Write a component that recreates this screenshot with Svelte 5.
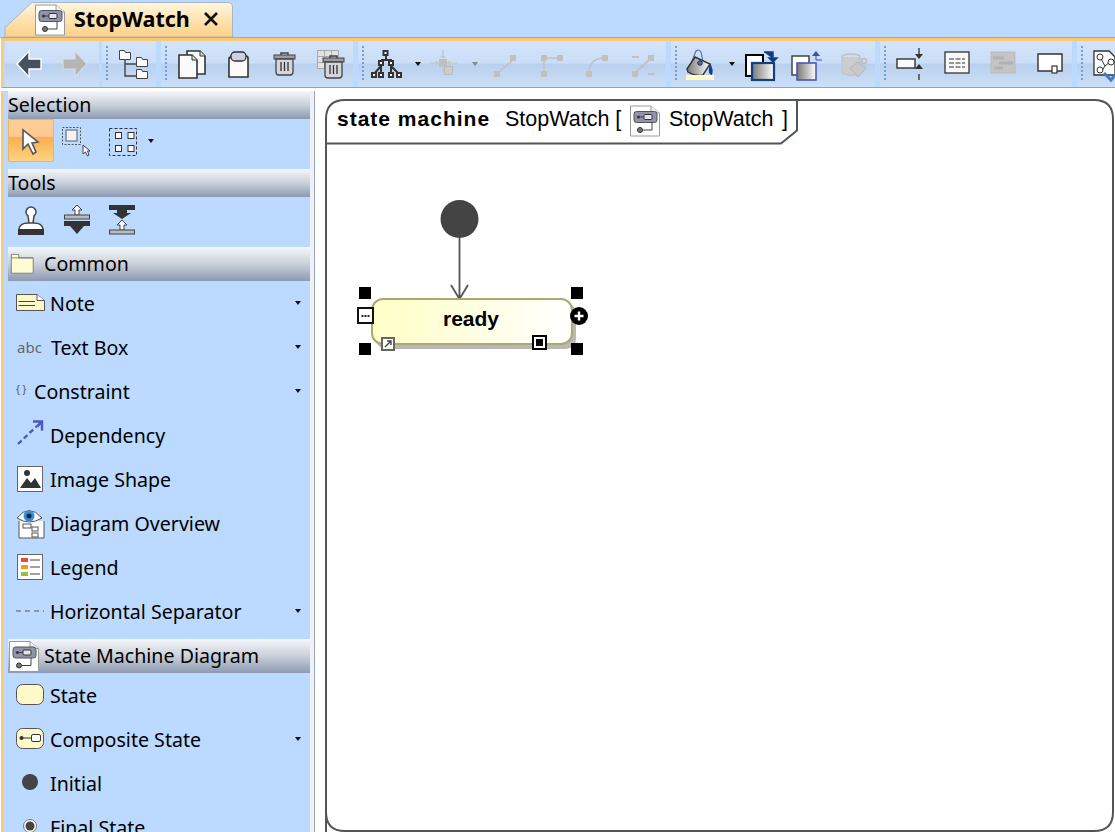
<script>
  const doc = `<path d="M1.500 1.500H22L30.500 8.500V31.500H1.500Z" fill="#fff" stroke="#9a9a9a"/><path d="M22 1.500V8.500H30.500" fill="#eee" stroke="#9a9a9a"/><rect x="5" y="7" width="23" height="11" rx="2.500" fill="#8f93ab" stroke="#555"/><rect x="15" y="10" width="8" height="5" rx="1" fill="#e4e4ee" stroke="#333"/><circle cx="9.500" cy="12.500" r="1.600" fill="#333"/><path d="M9.500 12.500H15M23 18V25.500H14" fill="none" stroke="#444"/><circle cx="11" cy="25.500" r="2.500" fill="#777" stroke="#333"/>`;
  const folder = (x, y) => `<path d="M${x}.5 ${y}.5h5l1 2h5v7h-11z" fill="#fff" stroke="#444" stroke-width="1"/>`;
  const paper = (x, y, w, h) => `<path d="M${x} ${y}H${x + w - 5}L${x + w} ${y + 5}V${y + h}H${x}Z" fill="#fbfbfb" stroke="#333" stroke-width="1.6"/><path d="M${x + w - 5} ${y}V${y + 5}H${x + w}" fill="#ddd" stroke="#333"/>`;
  const trash = (x, y) => `<path d="M${x + 7} ${y + 3}v-2h7v2" fill="none" stroke="#444" stroke-width="1.5"/><rect x="${x}" y="${y + 3}" width="21" height="4" fill="#9a9ca6" stroke="#444"/><path d="M${x + 2} ${y + 7}h17v13q0 3-3 3h-11q-3 0-3-3z" fill="#d5d5de" stroke="#444" stroke-width="1.3"/><path d="M${x + 7} ${y + 10}v9M${x + 10.5} ${y + 10}v9M${x + 14} ${y + 10}v9" stroke="#333" stroke-width="1.3"/>`;
  const gs = `fill="#c0c0c0" stroke="none"`;
  const sq = (x, y, s = 6) => `<rect x="${x}" y="${y}" width="${s}" height="${s}" ${gs}/>`;
  const icons = {
    back: `<path d="M4 16 16 3V11H28V21H16V29Z" fill="#44525f" stroke="#fff" stroke-width="1.4"/>`,
    forward: `<path d="M28 16 16 3V11H4V21H16V29Z" fill="#b5b5b5" stroke="#ddd" stroke-width="1.2"/>`,
    tree: folder(1, 2) + folder(18, 9) + folder(18, 21) + `<path d="M7 12V28H18M7 16H18" fill="none" stroke="#444" stroke-width="1.4"/>`,
    copy: paper(11, 3, 18, 23) + paper(3, 7, 18, 23),
    paste: `<path d="M8 10Q8 8 10 8H24Q26 8 26 10V29H7V10Z" fill="#fbfbfb" stroke="#333" stroke-width="1.6"/><rect x="9" y="4" width="15" height="9" rx="4" fill="#ced0e6" stroke="#333" stroke-width="1.3"/>`,
    trash: trash(6, 4),
    tabletrash: `<g fill="#e2e2e2" stroke="#aaa"><rect x="3.500" y="2.500" width="7" height="6"/><rect x="10.500" y="2.500" width="7" height="6"/><rect x="17.500" y="2.500" width="7" height="6"/><rect x="3.500" y="8.500" width="7" height="6"/><rect x="10.500" y="8.500" width="7" height="6"/><rect x="3.500" y="14.500" width="7" height="6"/><rect x="10.500" y="14.500" width="7" height="6"/></g>` + trash(9, 7),
    hier: `<g fill="#fff" stroke="#333" stroke-width="2"><path d="M16 8V12M11 17V24M21 17V24M11 18L4 26M21 18L29 26M11 12H21V16M11 12V16" fill="none"/><rect x="13.500" y="3" width="4" height="4"/><rect x="9" y="13" width="4" height="4"/><rect x="19" y="13" width="4" height="4"/><rect x="2" y="25" width="4" height="4"/><rect x="9" y="25" width="4" height="4"/><rect x="19" y="25" width="4" height="4"/><rect x="27" y="25" width="4" height="4"/></g>`,
    align: sq(12, 11, 8) + `<rect x="17.500" y="18.500" width="8" height="8" fill="#ccc" stroke="#bbb"/><path d="M16 2V10M14 8l2 2 2-2M16 24V20M2 15H11M9 13l2 2-2 2M30 15H21M23 13l-2 2 2 2" fill="none" stroke="#c4c4c4" stroke-width="1.2"/>`,
    l1: sq(5, 23) + sq(21, 7) + `<path d="M9 25 25 11" stroke="#c0c0c0" stroke-width="1.5"/>`,
    l2: sq(6, 7) + sq(22, 7) + sq(6, 23) + `<path d="M9 10H24M9 10V25" stroke="#c0c0c0" stroke-width="1.5"/>`,
    l3: sq(5, 23) + sq(21, 7) + `<path d="M8 25C8 14 14 10 24 10" fill="none" stroke="#c0c0c0" stroke-width="1.5"/>`,
    l4: sq(5, 23) + sq(21, 7) + `<path d="M8 25 24 10M5 9H12M21 26H28" stroke="#c0c0c0" stroke-width="2"/>`,
    bucket: `<path d="M8 13 12 3Q15 1 17 4L19 14" fill="none" stroke="#4c73c8" stroke-width="1.2"/><path d="M3 21 11 9 26 16 19 27Q12 29 4 24Z" fill="url(#bg)" stroke="#333" stroke-width="1.4"/><path d="M26 15Q30 22 28 27Q24 27 25 20Z" fill="#153f86"/><circle cx="16" cy="15" r="2.300" fill="#4c66b8" stroke="#234"/><rect x="2" y="27" width="28" height="5" fill="#fdfac8"/>`,
    front: `<rect x="2" y="7" width="17" height="21" fill="#fff" stroke="#000" stroke-width="2"/><rect x="8" y="15" width="22" height="17" fill="url(#bg)" stroke="#123f80" stroke-width="2.200"/><path d="M20 4H29V11M25 10H33L29 14Z" fill="#123f80" stroke="#123f80" stroke-width="1.500"/>`,
    backw: `<rect x="2" y="8" width="17" height="19" fill="#fff" stroke="#444" stroke-width="1.500"/><rect x="7" y="15" width="19" height="17" fill="url(#bg)" stroke="#4a55bb" stroke-width="1.600"/><path d="M22 8H30L26 3Z" fill="#3a4fb0"/><path d="M26 8V12H32" fill="none" stroke="#3a4fb0"/>`,
    bucketd: `<ellipse cx="15" cy="9" rx="9" ry="3" fill="none" stroke="#c0c0c0" stroke-width="1.400"/><path d="M6 9V25Q15 30 24 25V9" fill="#ccc" stroke="#c0c0c0"/><path d="M14 20 22 14 30 20 22 29Z" fill="#c8c8c8" stroke="#b5b5b5"/><circle cx="28" cy="13" r="2.500" fill="none" stroke="#bbb" stroke-width="1.500"/>`,
    size: `<rect x="2" y="11" width="18" height="9" fill="#fafafa" stroke="#333" stroke-width="1.400"/><path d="M24 0V6M24 26V32" stroke="#333" stroke-width="1.300"/><path d="M20 6H28L24 11ZM20 21H28L24 16Z" fill="#333"/>`,
    notes: `<rect x="4" y="4" width="24" height="21" fill="#f8f8f8" stroke="#333" stroke-width="1.300"/><path d="M8 11H24M8 15H24M8 19H24" stroke="#333" stroke-dasharray="5 1.500"/>`,
    grayrect: `<rect x="4" y="4" width="24" height="21" fill="#c4c4c4" stroke="#bbb"/><path d="M6 10H17M12 15H26M7 20H16" stroke="#b2b2b2" stroke-width="3"/>`,
    sizer: `<path d="M5 6H29V23H5Z" fill="#fff" stroke="#333" stroke-width="1.400"/><rect x="19" y="18" width="5" height="7" fill="#fff" stroke="#333" stroke-width="1.200"/>`,
    val: `<path d="M5 3H20L26 9V27H5Z" fill="#fff" stroke="#333" stroke-width="1.300"/><path d="M11 9 16 18M16 18 22 13M16 18 12 24" stroke="#333" fill="none"/><circle cx="11" cy="9" r="3" fill="#fff" stroke="#333"/><circle cx="22" cy="14" r="3" fill="#fff" stroke="#333"/><circle cx="11" cy="22" r="3" fill="#fff" stroke="#333"/><path d="M15 25 22 32 31 22" fill="none" stroke="#3f7fc4" stroke-width="3"/>`,
    pointer: `<path d="M8 5V24L13 19 18 29 21 27 17 18 23 17Z" fill="#fff" stroke="#555" stroke-width="1.600"/>`,
    rubber: `<rect x="1.500" y="2.500" width="18" height="17" fill="none" stroke="#555" stroke-dasharray="2 1.500"/><rect x="5" y="5" width="11" height="11" fill="#f2f2f2" stroke="#888" stroke-width="1.500"/><path d="M22 20V29L24.500 27 26.500 31 28 30 26.500 26 29 26Z" fill="#fff" stroke="#444"/>`,
    group: `<rect x="3.500" y="3.500" width="27" height="27" fill="none" stroke="#333" stroke-dasharray="3 2"/><g fill="#fff" stroke="#333"><rect x="9.500" y="7.500" width="6" height="6"/><rect x="22" y="7.500" width="6" height="6"/><rect x="9.500" y="20.500" width="6" height="6"/><rect x="22" y="20.500" width="6" height="6"/></g>`,
    stamp: `<circle cx="16" cy="9" r="5" fill="#fff" stroke="#444" stroke-width="1.500"/><path d="M13 13 14 20H18L19 13M4 26Q5 20 13 20H19Q27 20 28 26" fill="#fff" stroke="#444" stroke-width="1.500"/><rect x="3" y="26" width="26" height="6" fill="#333"/>`,
    spread: `<path d="M16 2 21 7H18V12H14V7H11Z" fill="#fff" stroke="#444"/><rect x="3.500" y="12" width="25" height="4" fill="#bbb" stroke="#444"/><rect x="3" y="18" width="26" height="5" fill="#333"/><path d="M9 23H23L16 31Z" fill="#333"/>`,
    join: `<rect x="3" y="2" width="26" height="5" fill="#333"/><path d="M11 7H21V10H25L16 16 7 10H11Z" fill="#333"/><path d="M16 17 21 22H18V27H14V22H11Z" fill="#fff" stroke="#444"/><rect x="3.500" y="27" width="25" height="4" fill="#bbb" stroke="#444"/>`,
    note: `<path d="M2.500 7.500H23L30.500 13.500V23.500H2.500Z" fill="#fef9c9" stroke="#555" stroke-width="1"/><path d="M23 7.500V13.500H30.500" fill="#fff" stroke="#555"/><path d="M4.500 14.500H21M4.500 18.500H21" stroke="#444"/>`,
    dep: `<path d="M4 25 23 7" stroke="#4a5abf" stroke-width="2.400" stroke-dasharray="5 3"/><path d="M19 2.500H28V11.500M28 2.500 23 7.500" fill="none" stroke="#4a5abf" stroke-width="2.500"/>`,
    image: `<rect x="3.500" y="3.500" width="25" height="25" fill="#fff" stroke="#666"/><circle cx="13" cy="10" r="3" fill="#333"/><path d="M6 25 13 15 17 20 21 15 27 25Z" fill="#333"/>`,
    overview: `<path d="M5 14V31H30V14" fill="#fff" stroke="#555"/><path d="M3 11Q15 -4 28 11Q15 19 3 11Z" fill="#fff" stroke="#555"/><circle cx="15" cy="9" r="5.500" fill="#2f8fe0"/><circle cx="15" cy="9" r="2.500" fill="#123"/><g fill="#fff" stroke="#555"><rect x="9" y="17" width="8" height="4"/><rect x="18" y="20" width="6" height="4"/><rect x="18" y="26" width="6" height="4"/></g>`,
    legend: `<rect x="3.500" y="3.500" width="25" height="25" fill="#fff" stroke="#666"/><rect x="7" y="7" width="7" height="4" fill="#e84a3c"/><rect x="7" y="14" width="7" height="4" fill="#f59a1e"/><rect x="7" y="21" width="7" height="4" fill="#93c13c"/><path d="M16 9H26M16 16H26M16 23H26" stroke="#444"/>`,
    sep: `<path d="M2 16H30" stroke="#555" stroke-dasharray="5 4" stroke-width="1"/>`,
    state: `<rect x="2.500" y="5.500" width="27" height="20" rx="6" fill="#fef9c9" stroke="#555"/>`,
    composite: `<rect x="2.500" y="5.500" width="27" height="20" rx="6" fill="#fef9c9" stroke="#555"/><circle cx="7.500" cy="15" r="2" fill="#333"/><path d="M8 15H17" stroke="#333"/><rect x="17.500" y="11.500" width="9" height="7" rx="1.500" fill="#fff" stroke="#333"/>`,
    initial: `<circle cx="16" cy="15" r="8" fill="#444"/>`,
    final: `<circle cx="16" cy="15" r="6.500" fill="#fff" stroke="#777"/><circle cx="16" cy="15" r="4.500" fill="#444"/>`,
    frag: doc
  };

  const groups = [
    { ml: 0, width: 94, grip: false, cells: [{ i: 'back' }, { i: 'forward' }] },
    { ml: 3, width: 54, grip: true, cells: [{ i: 'tree' }] },
    { ml: 5, width: 192, grip: true, cells: [{ i: 'copy', ml: -1 }, { i: 'paste' }, { i: 'trash' }, { i: 'tabletrash' }] },
    { ml: 5, width: 308, grip: true, cells: [{ i: 'hier', caret: true, ml: -4 }, { i: 'align', caret: true, dim: true, ml: 11 }, { i: 'l1', ml: 16 }, { i: 'l2' }, { i: 'l3' }, { i: 'l4' }] },
    { ml: 5, width: 204, grip: true, cells: [{ i: 'bucket', caret: true, ml: -3 }, { i: 'front', ml: 14 }, { i: 'backw' }, { i: 'bucketd' }] },
    { ml: 5, width: 192, grip: true, cells: [{ i: 'size', ml: -1 }, { i: 'notes' }, { i: 'grayrect' }, { i: 'sizer' }] },
    { ml: 5, width: 60, grip: true, cells: [{ i: 'val', ml: -4 }] }
  ];
  const common = [
    { i: 'note', t: 'Note', caret: true },
    { i: 'abc', t: 'Text Box', caret: true },
    { i: 'braces', t: 'Constraint', caret: true },
    { i: 'dep', t: 'Dependency' },
    { i: 'image', t: 'Image Shape' },
    { i: 'overview', t: 'Diagram Overview' },
    { i: 'legend', t: 'Legend' },
    { i: 'sep', t: 'Horizontal Separator', caret: true }
  ];
  const sm = [
    { i: 'state', t: 'State' },
    { i: 'composite', t: 'Composite State', caret: true },
    { i: 'initial', t: 'Initial' },
    { i: 'final', t: 'Final State' }
  ];
  const handles = [[359, 287], [571, 287], [359, 343], [571, 343]];
</script>

{#snippet ic(name, cls = 'i32')}
  <svg class={cls} viewBox="0 0 32 32" aria-hidden="true">{@html icons[name]}</svg>
{/snippet}

{#snippet row(r)}
  <div class="row">
    {#if r.i === 'abc'}
      <span class="abc">abc</span>
    {:else if r.i === 'braces'}
      <span class="braces">{'{ }'}</span>
    {:else}
      <span class="ricon">{@render ic(r.i)}</span>
    {/if}
    <span class="rlabel">{r.t}</span>
    {#if r.caret}<span class="caret rcaret"></span>{/if}
  </div>
{/snippet}

<svg class="defs" aria-hidden="true">
  <defs>
    <linearGradient id="bg" x1="0" x2="1" y1="0" y2="0">
      <stop offset="0" stop-color="#777" />
      <stop offset="1" stop-color="#fff" />
    </linearGradient>
    <linearGradient id="st" x1="0" x2="1" y1="0" y2="0">
      <stop offset="0" stop-color="#ffffc6" />
      <stop offset="1" stop-color="#ffffff" />
    </linearGradient>
    <linearGradient id="tabg" x1="0" x2="0" y1="0" y2="1">
      <stop offset="0" stop-color="#fff6df" />
      <stop offset="1" stop-color="#fdd084" />
    </linearGradient>
  </defs>
</svg>

<div class="app">
  <header class="tabs">
    <div class="tab">
      <svg class="tabshape" viewBox="0 0 234 37" aria-hidden="true">
        <path d="M5 37V27.500L32 2.500H228Q232.500 2.500 232.500 7V37Z" fill="url(#tabg)" stroke="#a9b6c6" />
      </svg>
      <span class="tabicon">{@render ic('frag')}</span>
      <span class="tabtitle">StopWatch</span>
      <svg class="close" viewBox="0 0 16 16" aria-hidden="true"><path d="M2 2 14 14M14 2 2 14" stroke="#111" stroke-width="2.600" /></svg>
    </div>
  </header>

  <div class="toolbar">
    {#each groups as g}
      <div class="group" class:first={!g.grip} style="width:{g.width}px;margin-left:{g.ml}px">
        {#if g.grip}<span class="grip"></span>{/if}
        {#each g.cells as c}
          <span class="cell" style="margin-left:{c.ml ?? 0}px">
            {@render ic(c.i)}
            {#if c.caret}<span class="caret tcaret" class:dim={c.dim}></span>{/if}
          </span>
        {/each}
      </div>
    {/each}
  </div>

  <div class="main">
    <aside class="palette">
      <div class="head">Selection</div>
      <div class="tools sel">
        <span class="btn active">{@render ic('pointer')}</span>
        <span class="btn">{@render ic('rubber')}</span>
        <span class="btn">{@render ic('group')}</span>
        <span class="caret selcaret"></span>
      </div>
      <div class="head">Tools</div>
      <div class="tools">
        <span class="btn">{@render ic('stamp')}</span>
        <span class="btn">{@render ic('spread')}</span>
        <span class="btn">{@render ic('join')}</span>
      </div>
      <div class="head big">
        <svg class="headicon" viewBox="0 0 32 32" aria-hidden="true"><path d="M1.500 26.500V5H10V9H26.500V26.500Z" fill="#fffcd3" stroke="#777" /><path d="M1.500 9H26.500" stroke="#777" /></svg>
        <span>Common</span>
      </div>
      {#each common as r}{@render row(r)}{/each}
      <div class="head big sm">
        <span class="smicon">{@render ic('frag')}</span>
        <span>State Machine Diagram</span>
      </div>
      {#each sm as r}{@render row(r)}{/each}
    </aside>

    <main class="canvas">
      <svg class="diagram" viewBox="0 88 1115 744" aria-label="State machine diagram">
        <path d="M326 840V119Q326 100 345 100H1094Q1113 100 1113 119V812Q1113 831 1094 831H345Q326 831 326 812Z" fill="#fff" stroke="#555" stroke-width="2" />
        <path d="M326 143.500H781L797 130.500V100" fill="none" stroke="#555" stroke-width="2" />
        <text x="337" y="126" class="kw">state machine</text>
        <text x="505" y="126" class="nm">StopWatch [</text>
        <g transform="translate(629 104)">
          <svg width="32" height="33" viewBox="0 0 32 32">{@html doc}</svg>
        </g>
        <text x="669" y="126" class="nm">StopWatch</text>
        <text x="782" y="126" class="nm">]</text>

        <circle cx="459.500" cy="219" r="19" fill="#444" />
        <path d="M459.500 238V299M451 285 459.500 299 468 285" fill="none" stroke="#555" stroke-width="1.800" />

        <rect x="376" y="303" width="200" height="46" rx="10" fill="#b8b8b8" />
        <rect x="372" y="299" width="200" height="45" rx="11" fill="url(#st)" stroke="#a9a970" stroke-width="2" />
        <text x="471" y="326" class="state">ready</text>

        {#each handles as h}<rect x={h[0]} y={h[1]} width="12" height="12" fill="#000" />{/each}
        <rect x="358" y="308" width="15" height="15" fill="#fff" stroke="#111" stroke-width="2" />
        <path d="M361.500 316H369.500" stroke="#222" stroke-width="2" stroke-dasharray="2 1" />
        <circle cx="579" cy="316" r="9" fill="#000" />
        <path d="M574.500 316H583.500M579 311.500V320.500" stroke="#fff" stroke-width="2.400" />
        <rect x="382" y="338" width="12" height="12" fill="#fff" stroke="#666" stroke-width="2" />
        <path d="M385 347 391 341M387 341H391V345" fill="none" stroke="#444" stroke-width="1.400" />
        <rect x="533" y="336" width="13" height="13" fill="#fff" stroke="#000" stroke-width="2" />
        <rect x="536" y="339" width="7" height="7" fill="#000" />
      </svg>
    </main>
  </div>
</div>

<style>
  :global(body) {
    margin: 0;
    background: #fff;
  }
  .defs {
    position: absolute;
    width: 0;
    height: 0;
  }
  .app {
    width: 1115px;
    height: 832px;
    overflow: hidden;
    display: flex;
    flex-direction: column;
    font-family: "Noto Sans", sans-serif;
    color: #000;
    background: #fff;
  }
  .tabs {
    height: 37px;
    flex: none;
    background: #bcd9ff;
    border-bottom: 1px solid #99a8bb;
    box-sizing: content-box;
  }
  .tab {
    position: relative;
    width: 234px;
    height: 37px;
    display: flex;
    align-items: center;
  }
  .tabshape {
    position: absolute;
    inset: 0 auto auto 0;
    width: 234px;
    height: 37px;
  }
  .tabicon {
    position: relative;
    width: 32px;
    height: 33px;
    margin: 2px 0 0 34px;
  }
  .tabicon svg {
    width: 32px;
    height: 33px;
    display: block;
  }
  .tabtitle {
    position: relative;
    margin-left: 8px;
    font-size: 21.500px;
    font-weight: 700;
    line-height: 38px;
    width: 116px;
    white-space: nowrap;
  }
  .close {
    position: relative;
    width: 16px;
    height: 16px;
    margin-left: 13px;
  }
  .toolbar {
    flex: none;
    height: 46px;
    margin-left: 1px;
    padding-left: 2px;
    display: flex;
    border-top: 3px solid #fcc872;
    border-left: 2px solid #fcc872;
    border-bottom: 1px solid #96a3b3;
    background: #bcd9ff;
  }
  .group {
    display: flex;
    flex: none;
    height: 46px;
    box-sizing: border-box;
    background: linear-gradient(#d3e4fa 0, #cbdef7 48%, #b9d0ee 50%, #c2d7f2 75%, #cde0f9 100%);
  }
  .group.first {
    padding-left: 1px;
  }
  .grip {
    width: 2px;
    height: 36px;
    margin: 5px 3px 0 4px;
    flex: none;
    background: repeating-linear-gradient(#6f9fdd 0 2px, transparent 2px 4px);
  }
  .cell {
    position: relative;
    width: 46px;
    height: 46px;
    flex: none;
    display: flex;
    align-items: center;
    justify-content: center;
  }
  .i32 {
    width: 32px;
    height: 32px;
    display: block;
    overflow: visible;
  }
  .caret {
    width: 0;
    height: 0;
    border-left: 3.500px solid transparent;
    border-right: 3.500px solid transparent;
    border-top: 4px solid #111;
  }
  .tcaret {
    position: absolute;
    left: 52px;
    top: 21px;
  }
  .tcaret.dim {
    border-top-color: #888;
  }
  .main {
    flex: 1;
    min-height: 0;
    display: flex;
    position: relative;
  }
  .palette {
    flex: none;
    width: 302px;
    height: 741px;
    margin-top: 3px;
    padding-left: 5px;
    border-left: 2px solid #fcc872;
    margin-left: 1px;
    background: #bcd9ff;
    border-right: 4px solid #eef2f8;
    box-shadow: 1px 0 0 #9aa3b0;
    overflow: hidden;
    box-sizing: content-box;
    font-size: 19.600px;
  }
  .head {
    height: 28px;
    display: flex;
    align-items: center;
    line-height: 28px;
    white-space: nowrap;
    background: linear-gradient(#f6f7f9, #c9d0da 50%, #8c9ab1);
  }
  .head.big {
    height: 34px;
    position: relative;
    padding-left: 36px;
  }
  .head.sm {
    margin-top: 6px;
  }
  .headicon {
    position: absolute;
    left: 2px;
    top: 3px;
    width: 28px;
    height: 28px;
  }
  .smicon {
    position: absolute;
    left: 0;
    top: 1px;
    width: 32px;
    height: 32px;
  }
  .tools {
    height: 50px;
    display: flex;
    align-items: flex-start;
  }
  .tools .btn {
    width: 46px;
    height: 43px;
    box-sizing: border-box;
    display: flex;
    align-items: center;
    justify-content: center;
  }
  .tools .btn + .btn {
    width: 45px;
  }
  .btn.active {
    border: 1px solid #eeb35f;
    border-radius: 2px;
    background: linear-gradient(#fecd97 0, #fdc98f 40%, #fbad54 42%, #fdd47f 100%);
  }
  .selcaret {
    margin: 20px 0 0 3.500px;
  }
  .row {
    height: 44px;
    display: flex;
    align-items: center;
    white-space: nowrap;
    position: relative;
  }
  .ricon {
    width: 32px;
    height: 32px;
    margin: 0 4px 0 6px;
    flex: none;
  }
  .abc {
    width: 26px;
    margin: 0 8px 0 9px;
    color: #666;
    font-size: 15px;
    flex: none;
  }
  .braces {
    width: 12px;
    margin: 0 6px 4px 8px;
    color: #555;
    font-size: 10px;
    flex: none;
  }
  .rcaret {
    position: absolute;
    left: 286.500px;
    top: 20px;
  }
  .canvas {
    flex: 1;
    min-width: 0;
    position: absolute;
    inset: 0;
    pointer-events: none;
  }
  .diagram {
    display: block;
    width: 1115px;
    height: 744px;
  }
  .kw {
    font: 700 21px "Liberation Sans", sans-serif;
    letter-spacing: 1px;
  }
  .nm {
    font: 400 21.500px "Liberation Sans", sans-serif;
  }
  .state {
    font: 700 21px "Liberation Sans", sans-serif;
    text-anchor: middle;
  }
</style>
